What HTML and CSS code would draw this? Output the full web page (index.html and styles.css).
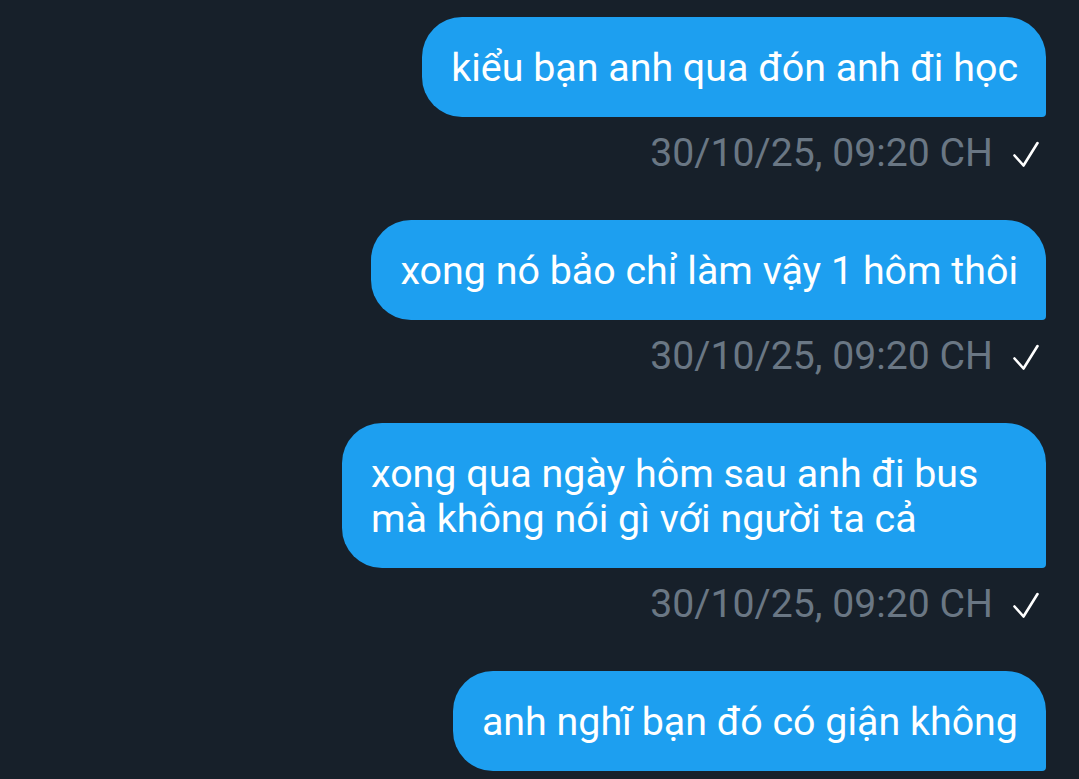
FILE: index.html
```html
<!DOCTYPE html>
<html lang="vi">
<head>
<meta charset="utf-8">
<link rel="stylesheet" href="styles.css">
</head>
<body>
<main class="chat">
  <div class="msg">
    <div class="bubble">kiểu bạn anh qua đón anh đi học</div>
    <div class="meta"><span class="time">30/10/25, 09:20 CH</span><svg class="check" viewBox="0 0 26 28" width="26" height="28"><path d="M1.5 15.5 L10.5 25.5 L24.5 3" /></svg></div>
  </div>
  <div class="msg">
    <div class="bubble">xong nó bảo chỉ làm vậy 1 hôm thôi</div>
    <div class="meta"><span class="time">30/10/25, 09:20 CH</span><svg class="check" viewBox="0 0 26 28" width="26" height="28"><path d="M1.5 15.5 L10.5 25.5 L24.5 3" /></svg></div>
  </div>
  <div class="msg">
    <div class="bubble bubble-wide">xong qua ngày hôm sau anh đi bus<br>mà không nói gì với người ta cả</div>
    <div class="meta"><span class="time">30/10/25, 09:20 CH</span><svg class="check" viewBox="0 0 26 28" width="26" height="28"><path d="M1.5 15.5 L10.5 25.5 L24.5 3" /></svg></div>
  </div>
  <div class="msg">
    <div class="bubble">anh nghĩ bạn đó có giận không</div>
  </div>
</main>
</body>
</html>
```

FILE: styles.css
```css
html, body {
  margin: 0;
  padding: 0;
  background: #17202a;
  overflow: hidden;
}

body {
  font-family: Roboto, "Noto Sans", sans-serif;
}

.chat {
  display: flex;
  flex-direction: column;
  align-items: flex-end;
  padding: 17px 33px 0 0;
}

.msg {
  display: flex;
  flex-direction: column;
  align-items: flex-end;
  margin-bottom: 44px;
}

.bubble {
  background: #1d9ff0;
  color: #ffffff;
  font-size: 39.4px;
  line-height: 45px;
  padding: 28px 28px 27px 29px;
  border-radius: 40px 40px 4px 40px;
  white-space: nowrap;
}

.bubble-wide {
  width: 704px;
  box-sizing: border-box;
}

.meta {
  display: flex;
  align-items: center;
  gap: 20px;
  margin-top: 14px;
  padding-right: 7px;
  font-size: 39.2px;
  line-height: 45px;
  color: #6a7784;
}

.check {
  display: block;
  fill: none;
  stroke: #ffffff;
  stroke-width: 2.6;
  stroke-linecap: round;
  stroke-linejoin: round;
}
```
